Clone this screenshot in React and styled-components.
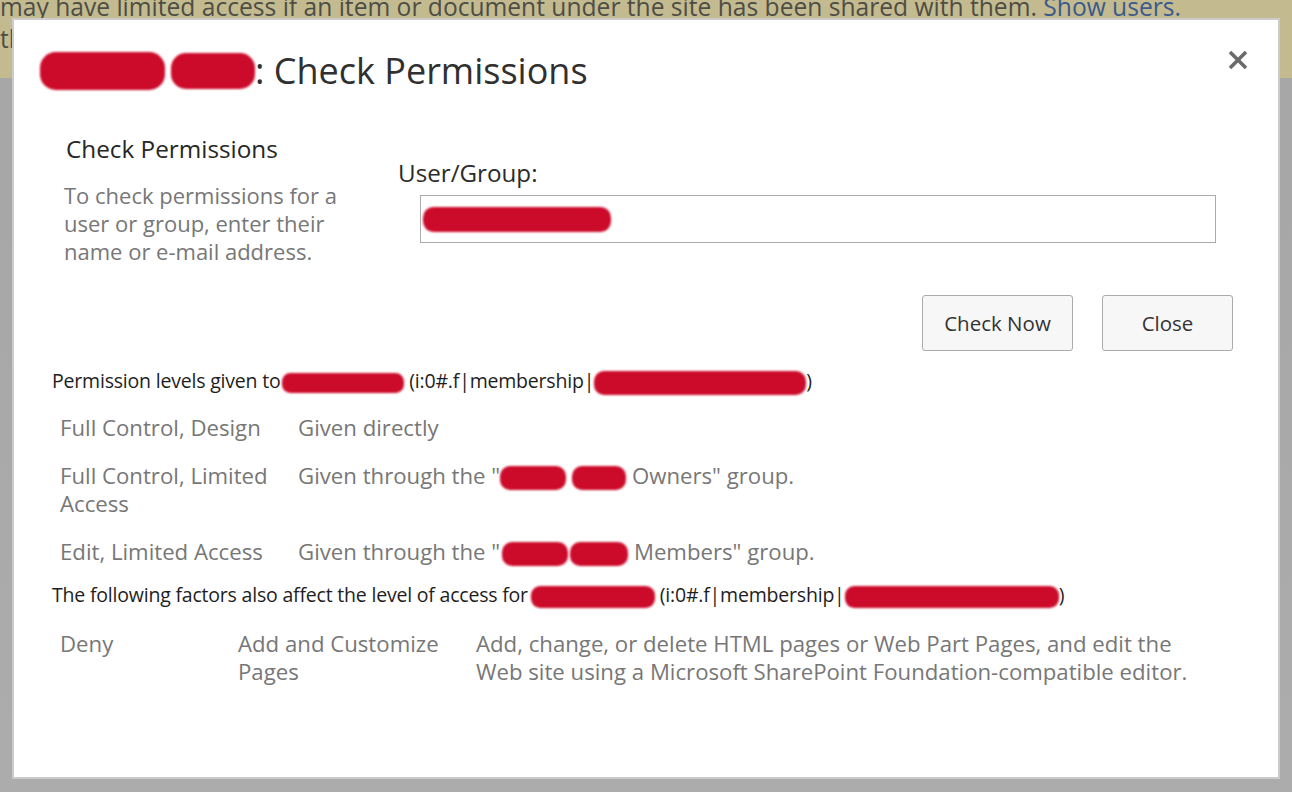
import styled, { createGlobalStyle } from "styled-components";

const GlobalStyle = createGlobalStyle`
  html, body {
    margin: 0;
    padding: 0;
  }
  body {
    font-family: "Open Sans", "Noto Sans", sans-serif;
    background: #aaaaaa;
  }
`;

// arrays in "how" are redacted name blobs: [width, gap before]
const permissionRows = [
  { level: "Full Control, Design", how: ["Given directly"] },
  { level: "Full Control, Limited Access", how: ['Given through the "', [66, 0], [54, 6], ' Owners" group.'] },
  { level: "Edit, Limited Access", how: ['Given through the "', [66, 2], [58, 2], ' Members" group.'] },
];

function App() {
  return (
    <Page>
      <GlobalStyle />
      <Banner>
        <BannerLine>
          may have limited access if an item or document under the site has been shared with them.{" "}
          <BannerLink>Show users.</BannerLink>
        </BannerLine>
        <BannerLine>them to this site.</BannerLine>
      </Banner>

      <Dialog>
        <TitleBar>
          <Title>
            <Redact $w={125} $h={38} />
            <Redact $w={84} $h={36} $gap={6} />: Check Permissions
          </Title>
          <CloseIcon viewBox="0 0 22 22" aria-label="Close">
            <path d="M3 3 L19 19 M19 3 L3 19" />
          </CloseIcon>
        </TitleBar>

        <Setup>
          <div>
            <SectionHeading>Check Permissions</SectionHeading>
            <Hint>
              To check permissions for a user or group, enter their name or e-mail address.
            </Hint>
          </div>
          <div>
            <FieldLabel>User/Group:</FieldLabel>
            <PeopleBox>
              <Redact $w={188} $h={25} />
            </PeopleBox>
          </div>
        </Setup>

        <Actions>
          <Button $w={151}>Check Now</Button>
          <Button $w={131}>Close</Button>
        </Actions>

        <Results>
          <ResultHeader>
            Permission levels given to
            <Redact $w={122} $h={20} $gap={2} /> (i:0#.f|membership|
            <Redact $w={212} $h={24} />)
          </ResultHeader>
          <Table $cols="238px 1fr" $top={19}>
            {permissionRows.map((row) => (
              <Row key={row.level}>
                <Cell $pr={14}>{row.level}</Cell>
                <Cell>
                  {row.how.map((part, i) =>
                    typeof part === "string" ? (
                      <span key={i}>{part}</span>
                    ) : (
                      <Redact key={i} $w={part[0]} $h={24} $gap={part[1]} />
                    )
                  )}
                </Cell>
              </Row>
            ))}
          </Table>

          <ResultHeader $top={17}>
            The following factors also affect the level of access for
            <Redact $w={124} $h={22} $gap={3} /> (i:0#.f|membership|
            <Redact $w={214} $h={22} />)
          </ResultHeader>
          <Table $cols="178px 238px 712px" $top={22}>
            <Row>
              <Cell>Deny</Cell>
              <Cell $pr={30}>Add and Customize Pages</Cell>
              <Cell>
                Add, change, or delete HTML pages or Web Part Pages, and edit the Web site using a
                Microsoft SharePoint Foundation-compatible editor.
              </Cell>
            </Row>
          </Table>
        </Results>
      </Dialog>
    </Page>
  );
}

export default App;

const Page = styled.div`
  position: relative;
  width: 1292px;
  height: 792px;
  overflow: hidden;
  background: linear-gradient(180deg, #a6a6a6 0%, #acacac 100%);
`;

const Banner = styled.div`
  height: 78px;
  background: #c3bb8f;
  color: #4e4d45;
  font-size: 24.6px;
  overflow: hidden;
`;

const BannerLine = styled.div`
  line-height: 32px;
  white-space: nowrap;
  &:first-child {
    margin-top: -9px;
  }
`;

const BannerLink = styled.span`
  color: #3a5a8e;
`;

const Dialog = styled.div`
  position: absolute;
  left: 12px;
  top: 18px;
  width: 1268px;
  height: 761px;
  box-sizing: border-box;
  border: 2px solid #cbcbcb;
  background: #ffffff;
  color: #333;
`;

const TitleBar = styled.div`
  display: flex;
  justify-content: space-between;
  align-items: flex-start;
  margin: 28px 29px 0 26px;
`;

const Title = styled.h1`
  margin: 0;
  font-size: 36px;
  font-weight: 400;
  line-height: 46px;
  color: #303030;
  display: flex;
  align-items: center;
`;

const CloseIcon = styled.svg`
  width: 22px;
  height: 22px;
  margin-top: 1px;
  fill: none;
  stroke: #6b6b6b;
  stroke-width: 3.6;
`;

const Redact = styled.span`
  display: inline-block;
  width: ${(p) => p.$w}px;
  height: ${(p) => p.$h}px;
  margin-left: ${(p) => p.$gap || 0}px;
  background: #cc0a2a;
  border-radius: ${(p) => p.$h / 2.4}px;
  filter: blur(1.3px);
  vertical-align: middle;
`;

const Setup = styled.div`
  display: grid;
  grid-template-columns: 334px 1fr;
  margin: 39px 0 0 50px;
`;

const SectionHeading = styled.h2`
  margin: 0 0 0 2px;
  font-size: 24.3px;
  font-weight: 400;
  line-height: 32px;
  color: #262626;
`;

const Hint = styled.p`
  margin: 16px 0 0;
  width: 300px;
  font-size: 22px;
  line-height: 28px;
  color: #777;
`;

const FieldLabel = styled.div`
  margin-top: 24px;
  font-size: 24.2px;
  line-height: 32px;
  color: #2b2b2b;
`;

const PeopleBox = styled.div`
  margin: 6px 0 0 22px;
  width: 796px;
  height: 48px;
  box-sizing: border-box;
  border: 1px solid #ababab;
  padding: 11px 0 0 2px;
  display: flex;
  align-items: flex-start;
`;

const Actions = styled.div`
  display: flex;
  justify-content: flex-end;
  gap: 29px;
  margin-top: 30px;
  padding-right: 45px;
`;

const Button = styled.button`
  width: ${(p) => p.$w}px;
  height: 56px;
  border: 1px solid #ababab;
  border-radius: 3px;
  background: #f7f7f7;
  color: #333;
  font-family: inherit;
  font-size: 20.5px;
  cursor: pointer;
`;

const Results = styled.div`
  margin: 18px 0 0 38px;
`;

const ResultHeader = styled.div`
  margin-top: ${(p) => p.$top || 0}px;
  font-size: 19.5px;
  line-height: 24px;
  color: #1e1e1e;
  white-space: nowrap;
  letter-spacing: -0.2px;
`;

const Table = styled.div`
  display: flex;
  flex-direction: column;
  gap: 20px;
  margin: ${(p) => p.$top}px 0 0 8px;
  --cols: ${(p) => p.$cols};
`;

const Row = styled.div`
  display: grid;
  grid-template-columns: var(--cols);
  font-size: 22.2px;
  line-height: 28px;
  color: #777;
`;

const Cell = styled.div`
  padding-right: ${(p) => p.$pr || 0}px;
`;
